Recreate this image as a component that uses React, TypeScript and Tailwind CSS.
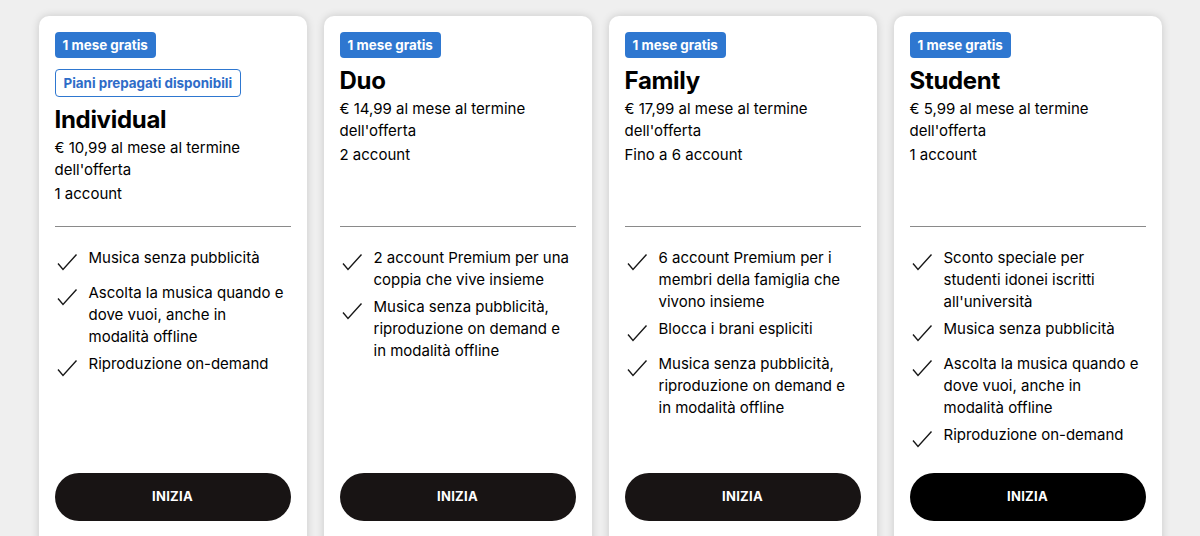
const plans = [
  {
    name: "Individual",
    prepaid: true,
    price: "€ 10,99 al mese al termine dell'offerta",
    accounts: "1 account",
    features: [
      "Musica senza pubblicità",
      "Ascolta la musica quando e dove vuoi, anche in modalità offline",
      "Riproduzione on-demand",
    ],
    dark: false,
  },
  {
    name: "Duo",
    prepaid: false,
    price: "€ 14,99 al mese al termine dell'offerta",
    accounts: "2 account",
    features: [
      "2 account Premium per una coppia che vive insieme",
      "Musica senza pubblicità, riproduzione on demand e in modalità offline",
    ],
    dark: false,
  },
  {
    name: "Family",
    prepaid: false,
    price: "€ 17,99 al mese al termine dell'offerta",
    accounts: "Fino a 6 account",
    features: [
      "6 account Premium per i membri della famiglia che vivono insieme",
      "Blocca i brani espliciti",
      "Musica senza pubblicità, riproduzione on demand e in modalità offline",
    ],
    dark: false,
  },
  {
    name: "Student",
    prepaid: false,
    price: "€ 5,99 al mese al termine dell'offerta",
    accounts: "1 account",
    features: [
      "Sconto speciale per studenti idonei iscritti all'università",
      "Musica senza pubblicità",
      "Ascolta la musica quando e dove vuoi, anche in modalità offline",
      "Riproduzione on-demand",
    ],
    dark: true,
  },
]

function Check() {
  return (
    <svg width="24" height="24" viewBox="0 0 24 24" fill="none" className="shrink-0 mt-[3px]">
      <path d="M3 13.5 L8 19.5 L21.5 4.5" stroke="#181818" strokeWidth="1.4" />
    </svg>
  )
}

export default function App() {
  return (
    <div
      className="h-[536px] overflow-hidden bg-[#efefef] text-black"
      style={{ fontFamily: "Inter, 'Noto Sans', sans-serif" }}
    >
      <div className="flex justify-center gap-[17px] pt-4">
        {plans.map((p) => (
          <div
            key={p.name}
            className="w-[268px] h-[540px] shrink-0 bg-white rounded-[10px] shadow-[0_0_9px_rgba(0,0,0,0.16)] px-4 pt-4 flex flex-col"
          >
            {/* header */}
            <div className="h-[194px] flex flex-col items-start">
              <span className="bg-[#2e77d0] text-white text-[13.4px] font-bold rounded-[4px] px-2 h-[26px] leading-[26px]">
                1 mese gratis
              </span>
              {p.prepaid && (
                <span className="mt-[11px] border border-[#2e77d0] text-[#2e6cc8] text-[13.4px] font-bold rounded-[4px] px-2 h-[28px] leading-[26px]">
                  Piani prepagati disponibili
                </span>
              )}
              <h2 className="mt-[8px] text-[24px] font-bold leading-[30px] tracking-[-0.3px]">{p.name}</h2>
              <p className="mt-[2px] text-[15px] leading-[22px] w-[200px]">{p.price}</p>
              <p className="mt-[2px] text-[15px] leading-[22px]">{p.accounts}</p>
            </div>
            <div className="h-px bg-[#8a8a8a]" />
            {/* features */}
            <ul className="mt-[20px] flex flex-col gap-[5px] flex-1">
              {p.features.map((f) => (
                <li key={f} className="flex gap-[10px] min-h-[30px]">
                  <Check />
                  <span className="max-w-[198px] text-[15px] leading-[22px]">{f}</span>
                </li>
              ))}
            </ul>
            <button
              className={`mb-[35px] h-[48px] rounded-full text-white text-[13px] font-bold tracking-[0.3px] ${
                p.dark ? "bg-black" : "bg-[#181414]"
              }`}
            >
              INIZIA
            </button>
          </div>
        ))}
      </div>
    </div>
  )
}
